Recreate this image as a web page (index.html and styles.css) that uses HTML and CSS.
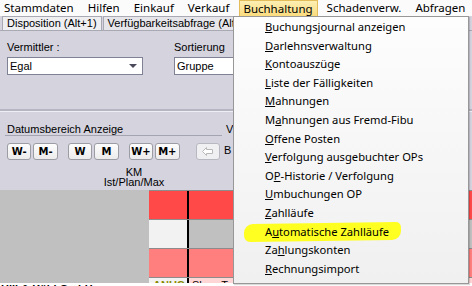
FILE: index.html
```html
<!DOCTYPE html>
<html lang="de">
<head>
    <meta charset="UTF-8">
    <title>Disposition</title>
    <link rel="stylesheet" href="styles.css">
</head>
<body>

    <div class="menubar">
        <span class="menu-item">Stammdaten</span>
        <span class="menu-item">Hilfen</span>
        <span class="menu-item">Einkauf</span>
        <span class="menu-item">Verkauf</span>
        <span class="menu-item open">Buchhaltung</span>
        <span class="menu-item">Schadenverw.</span>
        <span class="menu-item">Abfragen</span>
        <span class="menu-item">Fenster</span>
    </div>

    <div class="tabs">
        <div class="tab active">Disposition (Alt+1)</div>
        <div class="tab">Verfügbarkeitsabfrage (Alt+2)</div>
        <div class="tab">Terminplaner (Alt+3)</div>
    </div>

    <div class="filter">
        <div class="field vermittler">
            <div class="field-label">Vermittler :</div>
            <div class="combo">Egal<span class="combo-arrow"></span></div>
        </div>
        <div class="field sortierung">
            <div class="field-label">Sortierung</div>
            <div class="combo">Gruppe</div>
        </div>
    </div>

    <div class="dates">
        <div class="date-group">
            <div class="group-title">Datumsbereich Anzeige</div>
            <div class="buttons">
                <button class="btn">W-</button>
                <button class="btn">M-</button>
                <button class="btn gap">W</button>
                <button class="btn">M</button>
                <button class="btn gap">W+</button>
                <button class="btn">M+</button>
                <button class="btn back" disabled>
                    <svg width="11" height="9" viewBox="0 0 11 9"><path d="M0.5 4.5 L4.5 0.5 L4.5 2.5 L10.5 2.5 L10.5 6.5 L4.5 6.5 L4.5 8.5 Z" fill="#fff" stroke="#b8b8b8"/></svg>
                </button>
            </div>
        </div>
        <div class="next-group">
            <div class="group-title">V</div>
            <div class="next-label">B</div>
        </div>
    </div>

    <div class="km">KM<br>Ist/Plan/Max</div>

    <div class="table">
        <div class="side"></div>
        <div class="cells">
            <div class="cell red"></div><div class="bar"></div><div class="cell red"></div>
            <div class="cell light"></div><div class="bar"></div><div class="cell grey"></div>
            <div class="cell pink"></div><div class="bar"></div><div class="cell pink"></div>
            <div class="cell light code">ANUC</div><div class="bar"></div><div class="cell rose name">Shop-Test GmbH</div>
        </div>
    </div>
    <div class="table-foot">Hill &amp; Kühl GmbH</div>

    <div class="dropdown">
        <div class="drop-item"><u>B</u>uchungsjournal anzeigen</div>
        <div class="drop-item"><u>D</u>arlehnsverwaltung</div>
        <div class="drop-item"><u>K</u>ontoauszüge</div>
        <div class="drop-item"><u>L</u>iste der Fälligkeiten</div>
        <div class="drop-item"><u>M</u>ahnungen</div>
        <div class="drop-item">M<u>a</u>hnungen aus Fremd-Fibu</div>
        <div class="drop-item"><u>O</u>ffene Posten</div>
        <div class="drop-item"><u>V</u>erfolgung ausgebuchter OPs</div>
        <div class="drop-item">O<u>P</u>-Historie / Verfolgung</div>
        <div class="drop-item"><u>U</u>mbuchungen OP</div>
        <div class="drop-item"><u>Z</u>ahlläufe</div>
        <div class="drop-item marked"><span class="marker"></span><span class="drop-text">A<u>u</u>tomatische Zahlläufe</span></div>
        <div class="drop-item">Za<u>h</u>lungskonten</div>
        <div class="drop-item"><u>R</u>echnungsimport</div>
    </div>

</body>
</html>
```

FILE: styles.css
```css
body {
    margin: 0;
    width: 472px;
    height: 286px;
    overflow: hidden;
    position: relative;
    background: #ffffff;
    font-family: "Liberation Sans", Arial, sans-serif;
    font-size: 11px;
    color: #000;
}

/* menu bar */
.menubar {
    display: flex;
    height: 16px;
    background: #fbfbfb;
    font-family: "Noto Sans", sans-serif;
    font-size: 11.5px;
    line-height: 16px;
    white-space: nowrap;
    overflow: hidden;
}
.menu-item {
    padding: 0 7px;
}
.menu-item:first-child {
    padding-left: 4px;
}
.menu-item.open {
    margin: 0 2px 0 3px;
    padding: 0 4px 0 3px;
    line-height: 15px;
    background: linear-gradient(#fdeeb3, #fbdc7f);
    border: 1px solid #e3bd5a;
    border-bottom: none;
}

/* tabs */
.tabs {
    display: flex;
    height: 14px;
    padding-left: 2px;
    background: #d4d3de;
    border-bottom: 1px solid #a9a9b4;
    white-space: nowrap;
    overflow: hidden;
}
.tab {
    padding: 0 4px;
    line-height: 13px;
    background: #e6e6ea;
    border: 1px solid #a9a9b4;
    border-bottom: none;
    margin-right: 1px;
}
.tab.active {
    background: #efeff2;
}

/* filter panel */
.filter {
    display: flex;
    height: 80px;
    padding: 11px 0 0 7px;
    background: #d4d3de;
    border-bottom: 2px solid #b6b5c2;
    box-sizing: border-box;
}
.field-label {
    height: 15px;
    line-height: 11px;
}
.vermittler {
    width: 167px;
}
.combo {
    position: relative;
    height: 16px;
    padding-left: 2px;
    line-height: 16px;
    background: #fff;
    border: 1px solid #7f8195;
}
.vermittler .combo {
    width: 132px;
}
.sortierung .combo {
    width: 80px;
}
.combo-arrow {
    position: absolute;
    right: 5px;
    top: 6px;
    border-left: 4px solid transparent;
    border-right: 4px solid transparent;
    border-top: 4px solid #4a4a5a;
}

/* date range */
.dates {
    display: flex;
    height: 49px;
    padding: 11px 0 0 5px;
    background: #d4d3de;
    border-top: 1px solid #eeeef4;
    box-sizing: border-box;
}
.date-group {
    width: 217px;
}
.group-title {
    padding-left: 2px;
    height: 12px;
    line-height: 12px;
    border-bottom: 1px solid #a4a4b0;
}
.buttons {
    display: flex;
    padding: 7px 0 0 2px;
}
.btn {
    width: 25px;
    height: 17px;
    margin-right: 2px;
    padding: 0;
    font-family: "DejaVu Sans", sans-serif;
    font-size: 10px;
    font-weight: bold;
    color: #000;
    background: linear-gradient(#fdfdfd, #ececec);
    border: 1px solid #9c9ca4;
    border-radius: 3px;
}
.btn.gap {
    margin-left: 8px;
}
.btn.back {
    margin-left: 14px;
    background: #f0f0f2;
    border-color: #b8b8c0;
}
.btn.back svg {
    display: block;
    margin: 0 auto;
}
.next-group {
    padding-left: 2px;
}
.next-group .group-title {
    border-bottom: none;
}
.next-label {
    margin-top: 9px;
}

.km {
    height: 30px;
    padding: 7px 204px 0 0;
    box-sizing: border-box;
    line-height: 10px;
    text-align: center;
    background: #d4d3de;
}

/* table */
.table {
    display: flex;
    height: 93px;
    background: #c0c0c0;
}
.side {
    width: 149px;
}
.cells {
    flex: 1;
    display: grid;
    grid-template-columns: 38px 2px 1fr;
    grid-template-rows: 28px 28px 28px 1fr;
    row-gap: 1px;
    padding-top: 1px;
    background: #8c8c8c;
    overflow: hidden;
}
.cell.red { background: #ff4848; }
.cell.light { background: #f2f2f2; }
.cell.grey { background: #c0c0c0; }
.cell.pink { background: #ff7e7e; }
.cell.rose { background: #ffd6d6; }
.bar { background: #000; }
.code {
    padding: 1px 0 0 4px;
    font-weight: bold;
    color: #8a8a00;
}
.name {
    padding: 1px 0 0 3px;
}
.table-foot {
    padding-left: 1px;
    font-weight: bold;
}

/* dropdown menu */
.dropdown {
    position: absolute;
    left: 233px;
    top: 16px;
    width: 234px;
    height: 265px;
    padding-top: 1px;
    background: linear-gradient(#fdfdfd, #f0f0f0);
    border: 1px solid #979797;
    box-shadow: 1px 1px 1px rgba(0, 0, 0, 0.15);
    font-family: "Noto Sans", sans-serif;
    font-size: 11.2px;
    color: #000;
}
.drop-item {
    position: relative;
    height: 18.6px;
    line-height: 18.6px;
    padding-left: 31px;
    white-space: nowrap;
}
.marker {
    position: absolute;
    left: 10px;
    top: 0;
    width: 157px;
    height: 18px;
    background: #ffff22;
    border-radius: 9px 5px 9px 6px;
    transform: rotate(-0.8deg);
}
.drop-text {
    position: relative;
}
```
